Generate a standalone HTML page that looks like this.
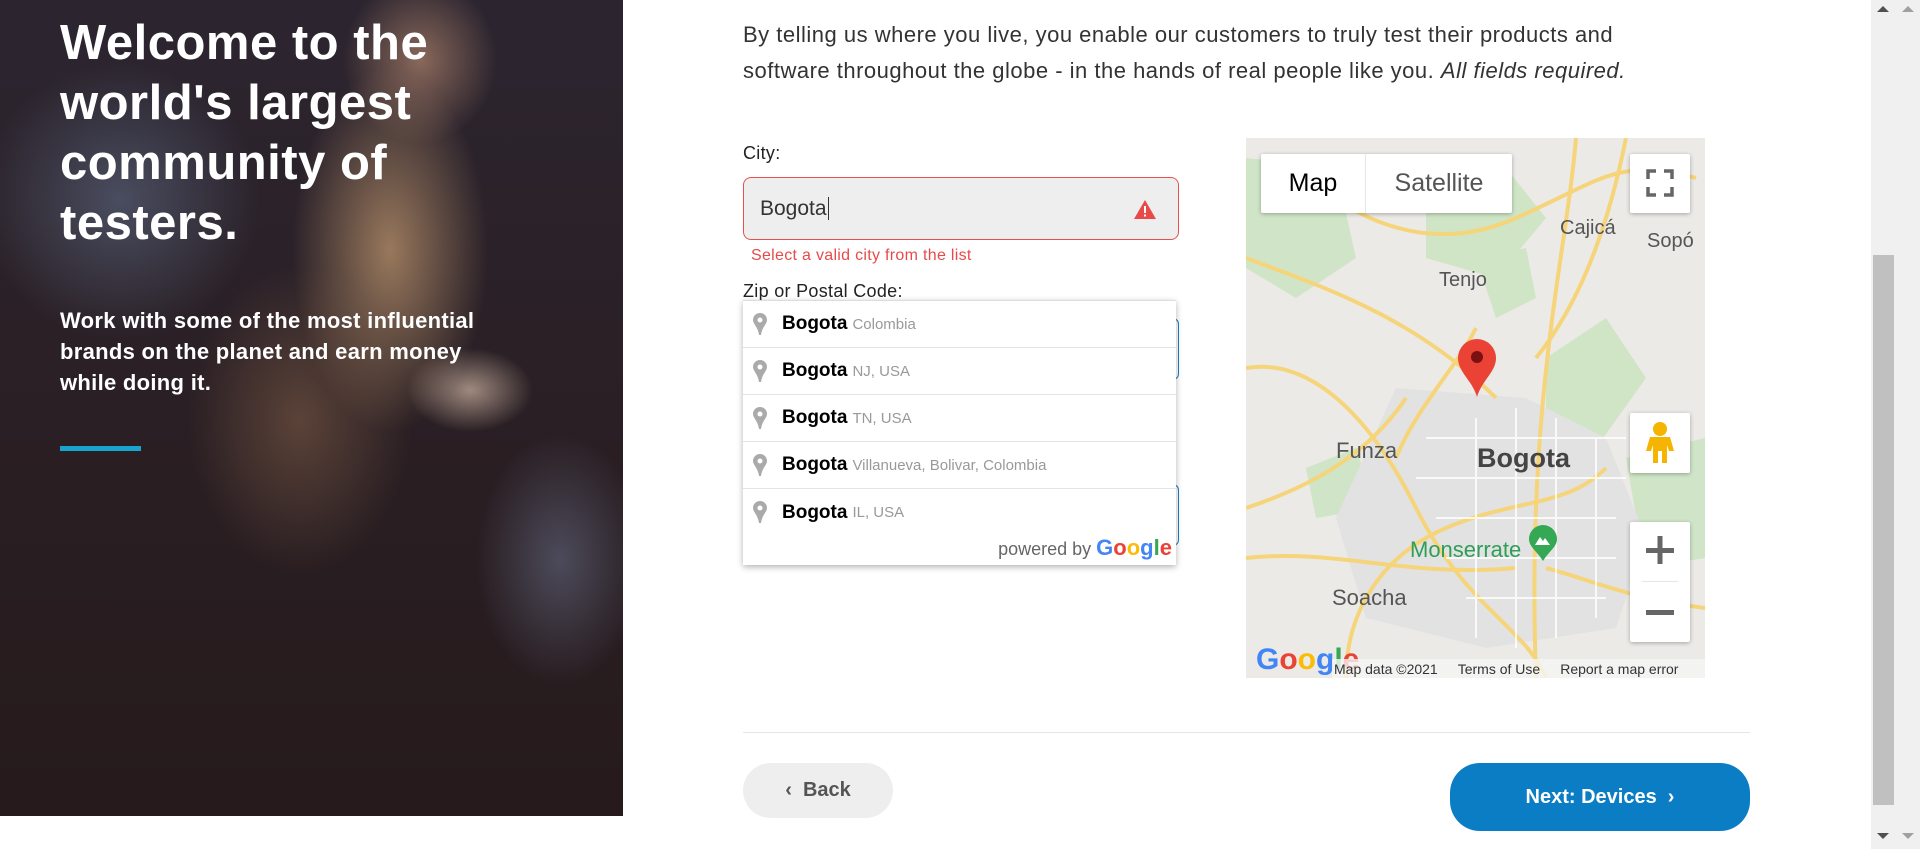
<!DOCTYPE html>
<html><head><meta charset="utf-8"><style>
*{margin:0;padding:0;box-sizing:border-box}
body{width:1920px;height:849px;overflow:hidden;background:#fff;font-family:"Liberation Sans",Arial,sans-serif;position:relative}
.a{position:absolute}
#photo{left:0;top:0;width:623px;height:816px;background:
radial-gradient(ellipse 90px 60px at 470px 390px,rgba(255,225,200,.55),transparent 70%),
radial-gradient(ellipse 140px 260px at 390px 250px,rgba(190,150,110,.75),transparent 70%),
radial-gradient(ellipse 110px 120px at 420px 60px,rgba(200,150,120,.6),transparent 70%),
radial-gradient(ellipse 200px 200px at 120px 200px,rgba(110,130,160,.45),transparent 70%),
radial-gradient(ellipse 120px 180px at 560px 560px,rgba(120,130,160,.45),transparent 70%),
radial-gradient(ellipse 160px 220px at 300px 420px,rgba(150,110,80,.45),transparent 70%),
linear-gradient(180deg,#2c2530 0%,#2a1f24 50%,#261a1c 100%)}
h1{position:absolute;left:60px;top:13px;color:#fff;font-size:49px;line-height:60px;font-weight:bold;letter-spacing:.5px}
.sub{left:60px;top:305px;color:#fff;font-size:22px;line-height:31px;font-weight:bold;width:455px;letter-spacing:.3px}
.bar{left:60px;top:446px;width:81px;height:5px;background:#17a4cf}
.p{left:743px;top:17px;font-size:22px;line-height:36px;color:#333;width:1050px;letter-spacing:.5px}
.lbl{font-size:18px;color:#222;letter-spacing:.3px}
.inp{left:743px;top:177px;width:436px;height:63px;background:#eee;border:1.5px solid #e85050;border-radius:8px;font-size:21px;color:#333;padding:19px 16px}
.err{left:751px;top:247px;color:#e84a4a;font-size:16px;letter-spacing:.3px}
.dd{left:743px;top:300px;width:433px;height:265px;background:#fff;box-shadow:0 2px 6px rgba(0,0,0,.3);border-top:1px solid #ddd}
.row{height:47px;border-bottom:1px solid #e4e4e4;display:flex;align-items:center;padding-left:39px;position:relative;font-size:19px}
.row b{color:#000;margin-right:5px}
.row span{color:#999;font-size:15px}
.row svg{position:absolute;left:10px;top:12px}
.pw{position:absolute;right:4px;bottom:4px;font-size:18px;color:#666}
#map{left:1246px;top:138px;width:459px;height:540px;background:#ebeae6;overflow:hidden}
.ctl{background:#fff;box-shadow:0 1px 4px rgba(0,0,0,.3);border-radius:2px}
.ml{position:absolute;font-size:20px;color:#555}
.btn{border-radius:30px;font-weight:bold;font-size:20px;display:flex;align-items:center;justify-content:center}
</style></head><body>
<div id="photo" class="a"></div>
<h1>Welcome to the<br>world's largest<br>community of<br>testers.</h1>
<div class="a sub">Work with some of the most influential<br>brands on the planet and earn money<br>while doing it.</div>
<div class="a bar"></div>

<div class="a p">By telling us where you live, you enable our customers to truly test their products and<br>software throughout the globe - in the hands of real people like you. <i>All fields required.</i></div>
<div class="a lbl" style="left:743px;top:143px">City:</div>
<div class="a inp">Bogota<span style="border-left:1px solid #333;margin-left:1px"></span>
<svg class="a" style="right:22px;top:22px" width="22" height="19" viewBox="0 0 22 19"><path d="M11 0L22 19H0Z" fill="#e84a4a"/><rect x="10" y="6" width="2" height="7" fill="#fff"/><rect x="10" y="14.5" width="2" height="2" fill="#fff"/></svg></div>
<div class="a err">Select a valid city from the list</div>
<div class="a lbl" style="left:743px;top:281px">Zip or Postal Code:</div>
<div class="a" style="left:1170px;top:318px;width:9px;height:62px;border:1.5px solid #1a7cc9;border-left:none;border-radius:0 6px 6px 0"></div>
<div class="a" style="left:1170px;top:484px;width:9px;height:62px;border:1.5px solid #1a7cc9;border-left:none;border-radius:0 6px 6px 0"></div>
<div class="a dd">
<div class="row"><svg width="14" height="22" viewBox="0 0 14 22"><path d="M7 0a7 7 0 0 1 7 7c0 4-5 7-6 15H6C5 14 0 11 0 7a7 7 0 0 1 7-7z" fill="#aaa"/><circle cx="7" cy="7" r="2.5" fill="#fff"/></svg><b>Bogota</b><span>Colombia</span></div>
<div class="row"><svg width="14" height="22" viewBox="0 0 14 22"><path d="M7 0a7 7 0 0 1 7 7c0 4-5 7-6 15H6C5 14 0 11 0 7a7 7 0 0 1 7-7z" fill="#aaa"/><circle cx="7" cy="7" r="2.5" fill="#fff"/></svg><b>Bogota</b><span>NJ, USA</span></div>
<div class="row"><svg width="14" height="22" viewBox="0 0 14 22"><path d="M7 0a7 7 0 0 1 7 7c0 4-5 7-6 15H6C5 14 0 11 0 7a7 7 0 0 1 7-7z" fill="#aaa"/><circle cx="7" cy="7" r="2.5" fill="#fff"/></svg><b>Bogota</b><span>TN, USA</span></div>
<div class="row"><svg width="14" height="22" viewBox="0 0 14 22"><path d="M7 0a7 7 0 0 1 7 7c0 4-5 7-6 15H6C5 14 0 11 0 7a7 7 0 0 1 7-7z" fill="#aaa"/><circle cx="7" cy="7" r="2.5" fill="#fff"/></svg><b>Bogota</b><span>Villanueva, Bolivar, Colombia</span></div>
<div class="row" style="border-bottom:none"><svg width="14" height="22" viewBox="0 0 14 22"><path d="M7 0a7 7 0 0 1 7 7c0 4-5 7-6 15H6C5 14 0 11 0 7a7 7 0 0 1 7-7z" fill="#aaa"/><circle cx="7" cy="7" r="2.5" fill="#fff"/></svg><b>Bogota</b><span>IL, USA</span></div>
<div class="pw">powered by <b style="font-size:22px"><span style="color:#4285f4">G</span><span style="color:#ea4335">o</span><span style="color:#fbbc05">o</span><span style="color:#4285f4">g</span><span style="color:#34a853">l</span><span style="color:#ea4335">e</span></b></div>
</div>

<div id="map" class="a">
<svg class="a" style="left:0;top:0" width="459" height="540" viewBox="0 0 459 540">
<g fill="#c9e4bf" opacity=".8"><path d="M180 60l80-30 40 50-50 60-70-20z"/><path d="M0 20l90 10 20 90-60 40-50-30z"/><path d="M300 220l60-40 40 60-50 70-50-30z"/><path d="M380 320l79-20v120l-60 10z"/><path d="M60 330l50-20 20 60-60 10z"/><path d="M230 120l50-10 10 50-40 20z"/></g>
<path d="M150 250l130 10 80 40 40 100-30 90-130 20-120-30-30-100z" fill="#e2e2e2"/>
<g fill="none" stroke="#f6d47a" stroke-width="4"><path d="M0 230c60-10 120 40 170 140s110 120 130 170"/><path d="M0 120c80 30 170 60 250 140"/><path d="M330 0c-10 120-50 260-40 540"/><path d="M380 0c-20 100-50 170-90 220"/><path d="M100 540c0-60 30-120 100-150 70-30 120-20 160-60"/><path d="M40 20c60 60 140 100 230 60s100-60 180-40"/><path d="M230 190c-20 40-60 80-80 130"/><path d="M0 420c90-10 160 20 270 10"/><path d="M300 430c40 10 80 30 159 40"/><path d="M160 260c-40 60-100 90-160 110"/></g>
<g fill="none" stroke="#fff" stroke-width="2" opacity=".8"><path d="M180 300h200M170 340h210M190 380h180M200 420h170M220 460h140M230 280v220M270 270v240M310 280v220M350 300v180"/></g>
</svg>
<div class="ml" style="left:193px;top:131px">Tenjo</div>
<div class="ml" style="left:314px;top:79px">Cajicá</div>
<div class="ml" style="left:401px;top:92px">Sopó</div>
<div class="ml" style="left:90px;top:300px;font-size:22px">Funza</div>
<div class="ml" style="left:231px;top:305px;font-size:27px;font-weight:bold;color:#444">Bogota</div>
<div class="ml" style="left:164px;top:399px;font-size:22px;color:#2f9e57">Monserrate</div>
<svg class="a" style="left:283px;top:387px" width="28" height="36" viewBox="0 0 28 36"><path d="M14 0a14 14 0 0 1 14 14c0 8-8 12-14 22C8 26 0 22 0 14A14 14 0 0 1 14 0z" fill="#34a853"/><path d="M6 20l5-8 3 4 2-3 5 7z" fill="#fff"/></svg>
<div class="ml" style="left:86px;top:447px;font-size:22px">Soacha</div>
<svg class="a" style="left:211px;top:200px" width="40" height="60" viewBox="0 0 40 60"><path d="M20 1a19 19 0 0 1 19 19c0 14-14 22-19 39C15 42 1 34 1 20A19 19 0 0 1 20 1z" fill="#ea4335"/><circle cx="20" cy="19" r="6" fill="#7a1010"/></svg>
<div class="a ctl" style="left:15px;top:16px;width:251px;height:59px;display:flex;font-size:25px">
<div style="width:105px;display:flex;align-items:center;justify-content:center;color:#000;border-right:1px solid #e6e6e6">Map</div>
<div style="flex:1;display:flex;align-items:center;justify-content:center;color:#555">Satellite</div></div>
<div class="a ctl" style="left:384px;top:16px;width:60px;height:59px">
<svg class="a" style="left:16px;top:15px" width="28" height="28" viewBox="0 0 28 28" fill="none" stroke="#666" stroke-width="3.5"><path d="M2 10V2h8M18 2h8v8M26 18v8h-8M10 26H2v-8"/></svg></div>
<div class="a ctl" style="left:384px;top:275px;width:60px;height:60px">
<svg class="a" style="left:15px;top:8px" width="30" height="44" viewBox="0 0 30 44"><circle cx="15" cy="8" r="7" fill="#f5b400"/><path d="M5 16h20l4 14h-5l-2-6v18h-5V30h-4v12H8V24l-2 6H1z" fill="#f5b400"/></svg></div>
<div class="a ctl" style="left:384px;top:384px;width:60px;height:120px">
<div class="a" style="left:12px;top:59px;width:36px;height:1px;background:#e6e6e6"></div>
<svg class="a" style="left:16px;top:14px" width="28" height="92" viewBox="0 0 28 92" fill="#666"><rect x="0" y="12" width="28" height="5"/><rect x="11.5" y="0" width="5" height="28"/><rect x="0" y="74" width="28" height="5"/></svg></div>
<div class="a" style="left:10px;top:505px;font-size:30px;font-weight:bold"><span style="color:#4285f4">G</span><span style="color:#ea4335">o</span><span style="color:#fbbc05">o</span><span style="color:#4285f4">g</span><span style="color:#34a853">l</span><span style="color:#ea4335">e</span></div>
<div class="a" style="left:86px;top:521px;right:0;height:19px;background:rgba(245,245,245,.8);font-size:14px;color:#333;display:flex;gap:20px;align-items:center;padding-left:2px"><span>Map data ©2021</span><span>Terms of Use</span><span>Report a map error</span></div>
</div>

<div class="a" style="left:743px;top:732px;width:1007px;height:1px;background:#e6e6e6"></div>
<div class="a btn" style="left:743px;top:763px;width:150px;height:55px;background:#eee;color:#555">‹&nbsp;&nbsp;Back</div>
<div class="a btn" style="left:1450px;top:763px;width:300px;height:68px;background:#0b7dc4;color:#fff">Next: Devices&nbsp;&nbsp;›</div>

<div class="a" style="left:1871px;top:0;width:49px;height:849px;background:#f0f0f0"></div>
<div class="a" style="left:1873px;top:255px;width:21px;height:550px;background:#c0c0c0"></div>
<div class="a" style="left:1877px;top:6px;width:0;height:0;border:6px solid transparent;border-bottom-color:#505050;border-top:none"></div>
<div class="a" style="left:1902px;top:6px;width:0;height:0;border:6px solid transparent;border-bottom-color:#a0a0a0;border-top:none"></div>
<div class="a" style="left:1877px;top:833px;width:0;height:0;border:6px solid transparent;border-top-color:#505050;border-bottom:none"></div>
<div class="a" style="left:1902px;top:833px;width:0;height:0;border:6px solid transparent;border-top-color:#a0a0a0;border-bottom:none"></div>
</body></html>
